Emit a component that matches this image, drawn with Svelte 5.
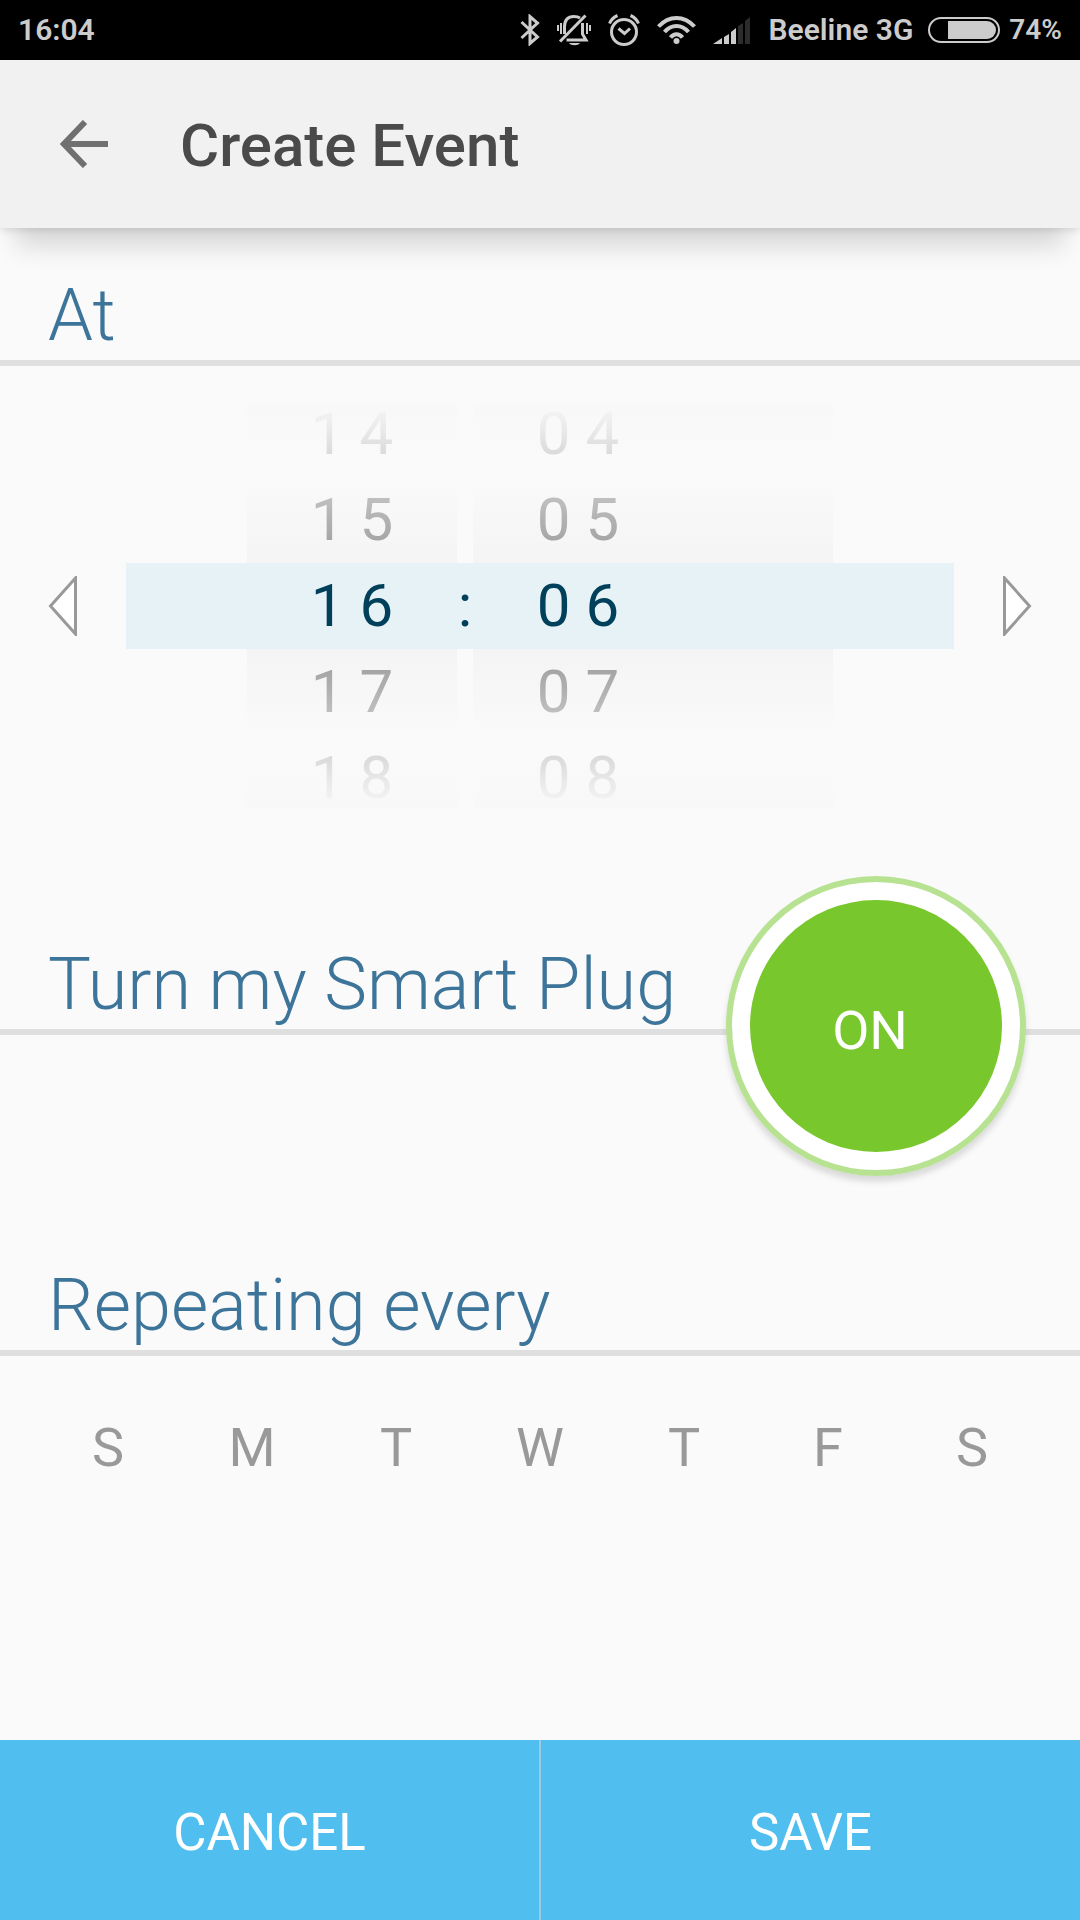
<script>
  let hour = $state(16);
  let minute = $state(6);
  let on = $state(true);
  let days = $state([
    { name: 'Sunday', letter: 'S', active: false },
    { name: 'Monday', letter: 'M', active: false },
    { name: 'Tuesday', letter: 'T', active: false },
    { name: 'Wednesday', letter: 'W', active: false },
    { name: 'Thursday', letter: 'T', active: false },
    { name: 'Friday', letter: 'F', active: false },
    { name: 'Saturday', letter: 'S', active: false }
  ]);

  const around = (value, size) => [-2, -1, 0, 1, 2].map((d) => (value + d + size) % size);
  const spaced = (value) => String(value).padStart(2, '0').split('').join(' ');

  const hours = $derived(around(hour, 24));
  const minutes = $derived(around(minute, 60));

  function shift(step) {
    minute = (minute + step + 60) % 60;
  }
</script>

<div class="screen">
  <div class="status">
    <span class="clock">16:04</span>
    <div class="tray">
      <svg width="20" height="32" viewBox="0 0 20 32" fill="none" stroke="#ccc" stroke-width="3">
        <path d="M1.5 8 17.5 23 10 29.5V2.5L17.5 9 1.5 24" />
      </svg>
      <svg width="34" height="32" viewBox="0 0 34 32" fill="none" stroke="#ccc" stroke-width="3">
        <path d="M7.500 20V13C7.500 6 11 2.500 17 2.500c3 0 4.500 .5 6 1.500M25.500 9v11l3.500 6H9.500" />
        <path d="M3 27.500 28.500 1.500" />
        <path d="M4 9v11M30 9v11M33 11v6M1 11v6" stroke-width="2" />
        <path d="M12 29h11c-2 3-9 3-11 0z" fill="#ccc" stroke="none" />
      </svg>
      <svg width="32" height="32" viewBox="0 0 32 32" fill="none" stroke="#ccc" stroke-width="3">
        <circle cx="16" cy="18" r="12.500" />
        <path d="m10.500 14.500 6 5 5.500-5" />
        <path d="M1.500 9.500C3 6 6 3 9.500 1.500M30.500 9.500C29 6 26 3 22.500 1.500" />
      </svg>
      <svg width="39" height="32" viewBox="0 0 39 32" fill="none" stroke="#ccc" stroke-width="4">
        <path d="M1.500 12.500C12 1 27 1 37.500 12.500" />
        <path d="M7.500 18C14.500 10 24.500 10 31.500 18" />
        <path d="M13.500 23.500C17 19 22 19 25.500 23.500" />
        <circle cx="19.500" cy="27" r="3" fill="#ccc" stroke="none" />
      </svg>
      <svg width="38" height="32" viewBox="0 0 38 32" fill="#ccc">
        <path d="M0 30 9 24V30zM11 23l5-3V30H11zM18 18l5-4V30H18z" />
        <path d="M25 12l5-3V30H25zM32 7l5-4V30H32z" fill="#2c2c2c" />
      </svg>
      <span class="carrier">Beeline 3G</span>
      <svg width="72" height="26" viewBox="0 0 72 26">
        <rect x="1" y="1" width="70" height="24" rx="12" fill="none" stroke="#ccc" stroke-width="2" />
        <path d="M20 4H59a9 9 0 0 1 0 18H20z" fill="#ccc" />
      </svg>
      <span class="charge">74%</span>
    </div>
  </div>

  <header>
    <button class="back" aria-label="Back">
      <svg width="48" height="48" viewBox="0 0 48 48" fill="none" stroke="#707070" stroke-width="6">
        <path d="M48 24H5M25 2 4 24 25 46" />
      </svg>
    </button>
    <h1>Create Event</h1>
  </header>

  <main>
    <section class="at">
      <h2>At</h2>
      <div class="picker">
        <button class="arrow" aria-label="Earlier" onclick={() => shift(-1)}>
          <svg width="30" height="60" viewBox="0 0 30 60">
            <path d="M27.500 2V58L2.500 30z" fill="#fff" stroke="#999" stroke-width="3" />
          </svg>
        </button>
        <div class="band">
          <div class="wheel hours">
            <div class="values">
              {#each hours as value, i (value)}
                <button class:current={i === 2} aria-label={`Hour ${value}`} onclick={() => (hour = value)}>{spaced(value)}</button>
              {/each}
            </div>
          </div>
          <span class="colon">:</span>
          <div class="wheel minutes">
            <div class="values">
              {#each minutes as value, i (value)}
                <button class:current={i === 2} aria-label={`Minute ${value}`} onclick={() => (minute = value)}>{spaced(value)}</button>
              {/each}
            </div>
          </div>
        </div>
        <button class="arrow" aria-label="Later" onclick={() => shift(1)}>
          <svg width="30" height="60" viewBox="0 0 30 60">
            <path d="M2.500 2V58L27.500 30z" fill="#fff" stroke="#999" stroke-width="3" />
          </svg>
        </button>
      </div>
    </section>

    <section class="plug">
      <h2>Turn my Smart Plug</h2>
      <button class="toggle" class:off={!on} aria-pressed={on} onclick={() => (on = !on)}>
        <span class="disc">{on ? 'ON' : 'OFF'}</span>
      </button>
    </section>

    <section class="repeat">
      <h2>Repeating every</h2>
      <div class="days">
        {#each days as day (day.name)}
          <button class:active={day.active} aria-label={day.name} aria-pressed={day.active} onclick={() => (day.active = !day.active)}>{day.letter}</button>
        {/each}
      </div>
    </section>
  </main>

  <footer>
    <button>CANCEL</button>
    <button>SAVE</button>
  </footer>
</div>

<style>
  :global(body) {
    margin: 0;
    background: #fafafa;
  }

  .screen {
    display: flex;
    flex-direction: column;
    min-height: 100vh;
    font-family: Roboto, sans-serif;
    background: #fafafa;
  }

  button {
    margin: 0;
    padding: 0;
    border: 0;
    background: none;
    color: inherit;
    font: inherit;
    cursor: pointer;
  }

  svg {
    display: block;
    flex: none;
  }

  .status {
    display: flex;
    align-items: center;
    justify-content: space-between;
    height: 60px;
    padding: 0 18px;
    background: #000;
    color: #ccc;
    font-size: 30px;
    font-weight: 600;
    line-height: 36px;
    white-space: nowrap;
  }

  .tray {
    display: flex;
    align-items: center;
    gap: 17px;
  }

  .carrier {
    margin-right: -2px;
  }

  .charge {
    margin-left: -8px;
    font-size: 28px;
  }

  header {
    position: relative;
    display: flex;
    align-items: center;
    gap: 72px;
    height: 168px;
    padding: 0 60px;
    background: #f1f1f1;
    box-shadow: 0 34px 24px -16px rgba(0, 0, 0, 0.14), 0 2px 8px rgba(0, 0, 0, 0.12);
  }

  h1 {
    margin: 0;
    padding-top: 4px;
    color: #4a4a4a;
    font-size: 60px;
    font-weight: 500;
    line-height: 72px;
  }

  main {
    display: flex;
    flex: 1;
    flex-direction: column;
  }

  h2 {
    margin: 0;
    padding: 0 48px;
    border-bottom: 6px solid #dfdfdf;
    color: #3d7499;
    font-size: 72px;
    font-weight: 300;
    line-height: 88px;
  }

  .at {
    padding-top: 44px;
  }

  .picker {
    display: flex;
    align-items: center;
    gap: 48px;
    padding: 38px 48px 0;
  }

  .band {
    display: flex;
    flex: 1;
    align-items: center;
    justify-content: center;
    background: linear-gradient(#e7f2f7, #e7f2f7) center / 100% 86px no-repeat;
    color: #999;
    font-size: 60px;
    line-height: 86px;
  }

  .wheel {
    height: 404px;
    background: linear-gradient(
      rgba(0, 0, 0, 0.008),
      transparent 16%,
      rgba(0, 0, 0, 0.024) 39.3%,
      transparent 39.3%,
      transparent 60.7%,
      rgba(0, 0, 0, 0.024) 60.7%,
      transparent 84%,
      rgba(0, 0, 0, 0.008)
    );
  }

  .values {
    display: flex;
    flex-direction: column;
    justify-content: center;
    width: 210px;
    height: 404px;
    -webkit-mask-image: linear-gradient(transparent, #000 39%, #000 61%, transparent);
    mask-image: linear-gradient(transparent, #000 39%, #000 61%, transparent);
  }

  .values button {
    flex: none;
    height: 86px;
  }

  .values .current,
  .colon {
    color: #00405a;
  }

  .minutes {
    width: 360px;
  }

  .colon {
    width: 16px;
    text-align: center;
  }

  .plug {
    position: relative;
    margin-top: 133px;
  }

  .toggle {
    position: absolute;
    top: -65px;
    right: 54px;
    box-sizing: border-box;
    width: 300px;
    height: 300px;
    padding: 18px;
    border: 6px solid #b7e291;
    border-radius: 50%;
    background: rgba(255, 255, 255, 0.95);
    background-clip: padding-box;
    box-shadow: 0 6px 6px rgba(0, 0, 0, 0.13);
    color: #fff;
    font-size: 54px;
  }

  .disc {
    display: flex;
    align-items: center;
    justify-content: center;
    box-sizing: border-box;
    width: 100%;
    height: 100%;
    padding: 8px 12px 0 0;
    border-radius: 50%;
    background: #78c72c;
    font-weight: 450;
  }

  .off {
    border-color: #ccc;
  }

  .off .disc {
    background: #999;
  }

  .repeat {
    margin-top: 227px;
  }

  .days {
    display: grid;
    grid-template-columns: repeat(7, 1fr);
    padding: 60px 36px;
    color: #999;
    font-size: 54px;
    line-height: 64px;
  }

  .days .active {
    color: #00405a;
  }

  footer {
    display: flex;
    height: 180px;
    background: #50bfef;
    color: #fff;
    font-size: 51px;
  }

  footer button {
    flex: 1;
    padding-top: 4px;
  }

  footer button + button {
    border-left: 2px solid #9bcbe2;
  }
</style>
